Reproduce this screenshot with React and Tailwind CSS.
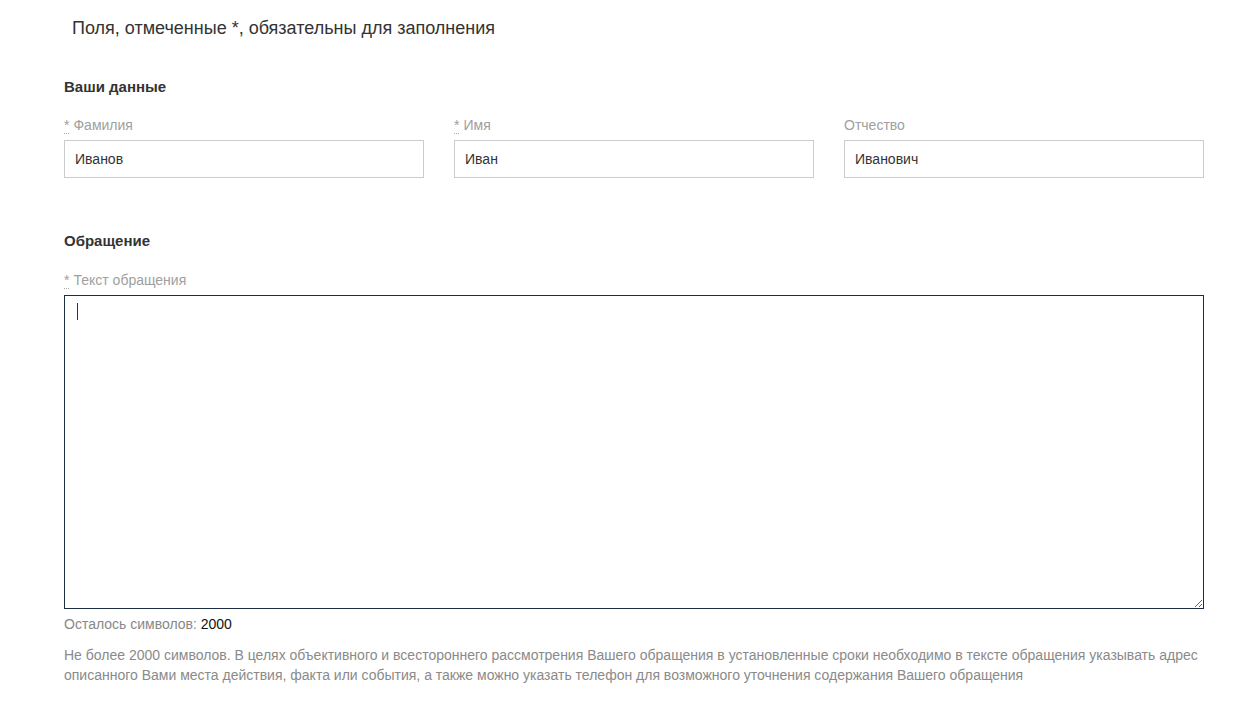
import React from "react"

const Req = () => (
  <abbr title="обязательное поле" className="no-underline border-b border-dotted border-[#aaa] mr-1 cursor-help">*</abbr>
)

const Field = ({ label, value, required }) => (
  <div className="flex flex-col">
    <label className="text-[14px] leading-[20px] text-[#a0a0a0] mb-[5px]">
      {required && <Req />}
      {label}
    </label>
    <input
      type="text"
      defaultValue={value}
      className="h-[38px] border border-[#cccccc] px-[10px] text-[14px] text-[#333] outline-none bg-white"
    />
  </div>
)

export default function App() {
  return (
    <div className="min-h-screen bg-white font-['Liberation_Sans',Arial,sans-serif]">
      <div className="ml-[64px] w-[1140px] pt-[16px]">
        <h1 className="pl-[8px] text-[18px] leading-[24px] text-[#333]">
          Поля, отмеченные *, обязательны для заполнения
        </h1>

        {/* Ваши данные */}
        <h2 className="mt-[36px] text-[15px] leading-[22px] font-bold text-[#333]">Ваши данные</h2>
        <div className="mt-[17px] grid grid-cols-3 gap-[30px]">
          <Field label="Фамилия" value="Иванов" required />
          <Field label="Имя" value="Иван" required />
          <Field label="Отчество" value="Иванович" />
        </div>

        {/* Обращение */}
        <h2 className="mt-[52px] text-[15px] leading-[22px] font-bold text-[#333]">Обращение</h2>
        <label className="block mt-[18px] mb-[5px] text-[14px] leading-[20px] text-[#a0a0a0]">
          <Req />
          Текст обращения
        </label>
        <div className="relative">
          <textarea
            className="block w-full h-[314px] border border-[#1c2d44] outline-none p-[10px] text-[14px] text-[#333] resize-y"
          />
          <span className="absolute left-[13px] top-[8px] w-px h-[17px] bg-[#333]" />
        </div>
        <p className="mt-[5px] text-[14px] leading-[20px] text-[#888]">
          Осталось символов: <span className="text-[#111]">2000</span>
        </p>
        <p className="mt-[11px] text-[14px] leading-[20px] text-[#8a8a8a]">
          Не более 2000 символов. В целях объективного и всестороннего рассмотрения Вашего обращения в установленные сроки необходимо в тексте обращения указывать адрес описанного Вами места действия, факта или события, а также можно указать телефон для возможного уточнения содержания Вашего обращения
        </p>
      </div>
    </div>
  )
}
